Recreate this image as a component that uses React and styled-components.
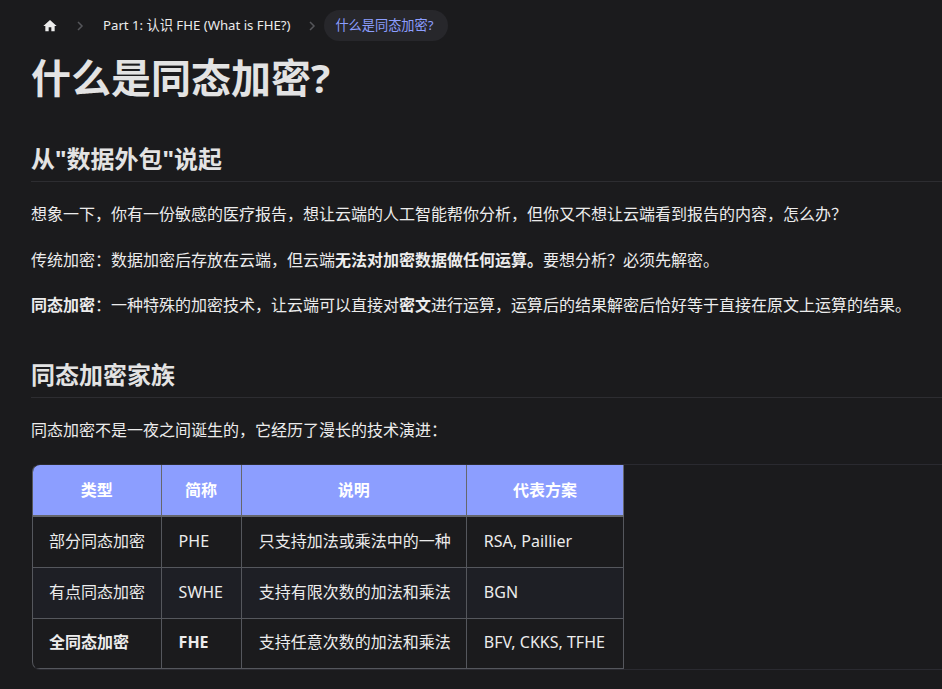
import React from "react";
import styled, { createGlobalStyle } from "styled-components";

const fontStack = `"Noto Sans", "Noto Sans CJK SC", sans-serif`;

const GlobalStyle = createGlobalStyle`
  html, body {
    margin: 0;
    padding: 0;
    background: #1b1b1d;
    overflow: hidden;
  }
  body {
    font-family: ${fontStack};
    font-size: 16px;
    line-height: 25.6px;
    color: #ececec;
  }
`;

const Page = styled.div`
  height: 689px;
  padding: 10px 0 0 31px;
  box-sizing: border-box;
`;

const Breadcrumbs = styled.nav`
  display: flex;
  align-items: center;
  height: 31px;
  font-size: 13.2px;
  margin-bottom: 11px;
`;

const Crumb = styled.a`
  display: flex;
  align-items: center;
  height: 31px;
  padding: ${({ $active }) => ($active ? "0 15px 0 11px" : "0 12px 0 11px")};
  border-radius: 16px;
  color: ${({ $active }) => ($active ? "#8c9eff" : "#ececec")};
  background: ${({ $active }) => ($active ? "#27272b" : "transparent")};
`;

const Separator = styled.span`
  display: flex;
  width: 19px;
  margin-right: 3px;
  justify-content: center;
  color: #55565a;
`;

const Title = styled.h1`
  margin: 0 0 39px;
  font-size: 40px;
  line-height: 52px;
  font-weight: 700;
  color: #e3e3e3;
`;

const SectionTitle = styled.h2`
  margin: ${({ $spaced }) => ($spaced ? "40px" : "0")} 0 20px;
  padding-bottom: 6px;
  border-bottom: 1px solid #2d2d31;
  font-size: 24px;
  line-height: 32px;
  font-weight: 700;
  color: #e3e3e3;
`;

const Para = styled.p`
  margin: 0 0 ${({ $tight }) => ($tight ? "21px" : "20px")};
`;

const TableWrap = styled.div`
  margin-left: 1px;
  border: 1px solid #2a2a30;
  border-left-color: #55575d;
  border-right: none;
  border-radius: 8px 0 0 8px;
  overflow: hidden;
`;

const Table = styled.table`
  border-collapse: collapse;
  table-layout: fixed;
  width: 591px;
`;

const Th = styled.th`
  height: 50px;
  padding: 0;
  background: #8c9eff;
  color: #ffffff;
  font-weight: 700;
  text-align: center;
  border: 1px solid #65676d;
  border-bottom-width: 2px;
  border-top: none;
  &:first-child { border-left: none; }
`;

const Tr = styled.tr`
  background: ${({ $alt }) => ($alt ? "#1e1f25" : "transparent")};
  &:last-child td { height: 50px; }
`;

const Td = styled.td`
  height: 51px;
  padding: 0 16px 1px 17px;
  box-sizing: border-box;
  border: 1px solid #55575d;
  white-space: nowrap;
  font-weight: ${({ $bold }) => ($bold ? 700 : 400)};
  &:first-child {
    border-left: none;
    padding-left: 16px;
  }
`;

const Bold = styled.strong`
  font-weight: 700;
`;

const HomeIcon = () => (
  <svg width="16" height="16" viewBox="0 0 24 24" fill="#ececec">
    <path d="M10 20v-6h4v6h5v-8h3L12 3 2 12h3v8z" />
  </svg>
);

const Chevron = () => (
  <svg width="12" height="12" viewBox="0 0 24 24" fill="none" stroke="currentColor" strokeWidth="3">
    <path d="M8 4l8 8-8 8" />
  </svg>
);

const rows = [
  { type: "部分同态加密", abbr: "PHE", desc: "只支持加法或乘法中的一种", scheme: "RSA, Paillier" },
  { type: "有点同态加密", abbr: "SWHE", desc: "支持有限次数的加法和乘法", scheme: "BGN", alt: true },
  { type: "全同态加密", abbr: "FHE", desc: "支持任意次数的加法和乘法", scheme: "BFV, CKKS, TFHE", bold: true },
];

export default function App() {
  return (
    <Page>
      <GlobalStyle />
      <Breadcrumbs>
        <Crumb><HomeIcon /></Crumb>
        <Separator><Chevron /></Separator>
        <Crumb>Part 1: 认识 FHE (What is FHE?)</Crumb>
        <Separator><Chevron /></Separator>
        <Crumb $active>什么是同态加密?</Crumb>
      </Breadcrumbs>
      <Title>什么是同态加密?</Title>
      <SectionTitle>从"数据外包"说起</SectionTitle>
      <Para>想象一下，你有一份敏感的医疗报告，想让云端的人工智能帮你分析，但你又不想让云端看到报告的内容，怎么办？</Para>
      <Para>传统加密：数据加密后存放在云端，但云端<Bold>无法对加密数据做任何运算。</Bold>要想分析？必须先解密。</Para>
      <Para><Bold>同态加密</Bold>：一种特殊的加密技术，让云端可以直接对<Bold>密文</Bold>进行运算，运算后的结果解密后恰好等于直接在原文上运算的结果。</Para>
      <SectionTitle $spaced>同态加密家族</SectionTitle>
      <Para $tight>同态加密不是一夜之间诞生的，它经历了漫长的技术演进：</Para>
      <TableWrap>
        <Table>
          <colgroup>
            <col width="128" />
            <col width="80" />
            <col width="225" />
            <col width="157" />
          </colgroup>
          <thead>
            <tr>
              <Th>类型</Th>
              <Th>简称</Th>
              <Th>说明</Th>
              <Th>代表方案</Th>
            </tr>
          </thead>
          <tbody>
            {rows.map((r) => (
              <Tr key={r.abbr} $alt={r.alt}>
                <Td $bold={r.bold}>{r.type}</Td>
                <Td $bold={r.bold}>{r.abbr}</Td>
                <Td>{r.desc}</Td>
                <Td>{r.scheme}</Td>
              </Tr>
            ))}
          </tbody>
        </Table>
      </TableWrap>
    </Page>
  );
}
